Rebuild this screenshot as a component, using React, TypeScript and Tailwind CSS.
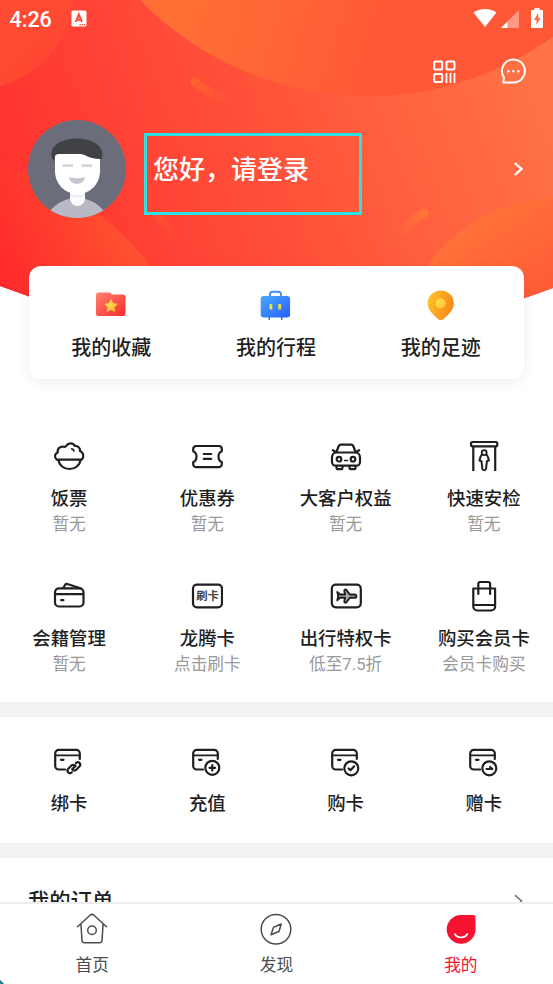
import type { ReactNode } from 'react'

const line = {
  fill: 'none',
  stroke: '#1f1f1f',
  strokeWidth: 2.2,
  strokeLinecap: 'round',
  strokeLinejoin: 'round',
} as const

function Icon({ children }: { children: ReactNode }) {
  return (
    <svg viewBox="0 0 32 32" className="w-8 h-8 shrink-0" {...line}>
      {children}
    </svg>
  )
}

function BankCard({ children }: { children: ReactNode }) {
  return (
    <Icon>
      <path d="M12 24.5H5.8A3.6 3.6 0 0 1 2.2 20.9V8.5A3.6 3.6 0 0 1 5.8 4.9H23.2A3.6 3.6 0 0 1 26.8 8.5V14" />
      <path d="M2.5 10.3H26.5" strokeWidth="1.7" />
      <path d="M8 14.8h2.5" />
      {children}
    </Icon>
  )
}

const shortcuts = [
  {
    label: '我的收藏',
    icon: (
      <svg viewBox="0 0 32 32" className="w-8 h-8">
        <defs>
          <linearGradient id="folder" x1="0" y1="0" x2="1" y2="1">
            <stop stopColor="#ff8170" />
            <stop offset="1" stopColor="#f92c2c" />
          </linearGradient>
          <linearGradient id="star" x1="0" y1="0" x2="1" y2="1">
            <stop stopColor="#fff05a" />
            <stop offset="1" stopColor="#ffb52a" />
          </linearGradient>
        </defs>
        <path d="M3.5 3.5H14c1.4 0 2.2.7 2.5 2H28A2.5 2.5 0 0 1 30.5 8v16.5A2.5 2.5 0 0 1 28 27H3.5A2.5 2.5 0 0 1 1 24.5V6a2.5 2.5 0 0 1 2.5-2.5Z" fill="url(#folder)" />
        <path d="m16 10.7 1.9 3.9 4.2.6-3 3 .7 4.2-3.8-2-3.8 2 .7-4.2-3-3 4.2-.6Z" fill="url(#star)" stroke="url(#star)" strokeWidth=".8" strokeLinejoin="round" />
      </svg>
    ),
  },
  {
    label: '我的行程',
    icon: (
      <svg viewBox="0 0 32 32" className="w-8 h-8">
        <defs>
          <linearGradient id="suitcase" x1="0" y1="0" x2="1" y2="1">
            <stop stopColor="#46a9fc" />
            <stop offset="1" stopColor="#2a5efc" />
          </linearGradient>
        </defs>
        <path d="M10 8V5.2A2.4 2.4 0 0 1 12.4 2.8h6.2A2.4 2.4 0 0 1 21 5.2V8" fill="none" stroke="#3d8ff2" strokeWidth="1.9" />
        <path d="M9.3 27v3.5M21.7 27v3.5" stroke="#3373e8" strokeWidth="1.5" strokeLinecap="round" />
        <rect x=".7" y="7" width="29.4" height="21.5" rx="3" fill="url(#suitcase)" />
        <path d="M10.9 15v5.5M19.7 15v5.5" stroke="#e9e043" strokeWidth="2.8" />
      </svg>
    ),
  },
  {
    label: '我的足迹',
    icon: (
      <svg viewBox="0 0 32 32" className="w-8 h-8">
        <defs>
          <linearGradient id="pin" x1="0" y1="0" x2="1" y2=".3">
            <stop stopColor="#ffc52b" />
            <stop offset="1" stopColor="#f98a1b" />
          </linearGradient>
          <linearGradient id="dot" x1="0" y1="0" x2="1" y2="1">
            <stop stopColor="#ffe94d" />
            <stop offset="1" stopColor="#ffbd2e" />
          </linearGradient>
        </defs>
        <path d="M15.7 1.5c7.5 0 13.1 5.7 13.1 12.7 0 6.3-4.3 10.5-11 16.2-1.3 1.1-2.9 1.1-4.2 0C7 24.7 2.7 20.5 2.7 14.2 2.7 7.2 8.3 1.5 15.7 1.5Z" fill="url(#pin)" />
        <circle cx="15.7" cy="14.5" r="5" fill="url(#dot)" />
      </svg>
    ),
  },
]

const services = [
  {
    label: '饭票',
    note: '暂无',
    icon: (
      <Icon>
        <path d="M3.8 19.6C.8 17.2 1.8 13.6 4.7 12.5 4 8.6 7.4 6 10.8 6.8c1.1.3 2-.1 2.7-1.2 1.8-3 6.7-3 8.2.3 3.3-.4 5.7 2.2 5.3 5.2 3.9 1.6 4.1 6.2 1.7 8.5Z" />
        <path d="M5.5 20c.6 5.3 5.3 9 11 9s10.4-3.7 11-9" />
        <path d="M18.7 8.8c1.3.1 2 .9 2.2 2.2" strokeWidth="1.7" />
      </Icon>
    ),
  },
  {
    label: '优惠券',
    note: '暂无',
    icon: (
      <Icon>
        <path d="M5.2 6h22.6a3 3 0 0 1 3 3v2.3c-2 .8-3.3 2.9-3.3 5.4s1.3 4.6 3.3 5.4v2.1a3 3 0 0 1-3 3H5.2a3 3 0 0 1-3-3v-2.1c2-.8 3.3-2.9 3.3-5.4s-1.3-4.6-3.3-5.4V9a3 3 0 0 1 3-3Z" />
        <path d="M12.8 14h7.4M12.8 18.9h7.4" />
      </Icon>
    ),
  },
  {
    label: '大客户权益',
    note: '暂无',
    icon: (
      <Icon>
        <path d="m6.5 12 2-5.5C9 5.300 9.700 4.700 11 4.700h10c1.300 0 2 .6 2.500 1.800l2 5.500" />
        <path d="M6.500 12.500h19c2.700 0 4.500 2.200 4.500 5V22a3.700 3.700 0 0 1-3.700 3.700H5.700A3.700 3.700 0 0 1 2 22v-4.500c0-2.800 1.800-5 4.500-5ZM2.800 10.200l3.500 2M29.200 10.200l-3.500 2" />
        <path d="M6.5 26v1.4c0 1.1.7 1.8 1.8 1.8h2.4c1.1 0 1.8-.7 1.8-1.8V26M19.5 26v1.4c0 1.1.7 1.8 1.8 1.8h2.4c1.1 0 1.8-.7 1.8-1.8V26" />
        <circle cx="9" cy="19.2" r="2.3" />
        <circle cx="23" cy="19.2" r="2.3" />
        <path d="M14.5 20.5h3" strokeWidth="1.5" />
      </Icon>
    ),
  },
  {
    label: '快速安检',
    note: '暂无',
    icon: (
      <Icon>
        <rect x="3" y="2" width="26.3" height="4.3" rx="1.5" />
        <path d="M5.3 7v24M27.2 7v24" strokeLinecap="butt" />
        <path d="M14 14.600c-1.500.8-2 3.900-2.500 6l2 .7.9 7.700c.2 1.700 3.400 1.700 3.600 0l.9-7.700 2-.7c-.5-2.100-1-5.200-2.500-6" strokeWidth="2" />
        <circle cx="16.2" cy="12.6" r="2.5" strokeWidth="1.8" />
      </Icon>
    ),
  },
  {
    label: '会籍管理',
    note: '暂无',
    icon: (
      <Icon>
        <rect x="2" y="8.3" width="28.5" height="18.2" rx="4" />
        <path d="M2.5 14.2h27.5M8.2 20.2h2.2M10.3 7.8l2-3.1c.5-.8 1.2-1 2-.7L27.5 8.3" />
      </Icon>
    ),
  },
  {
    label: '龙腾卡',
    note: '点击刷卡',
    icon: (
      <Icon>
        <rect x="2" y="4.7" width="29" height="22.6" rx="4" />
        <text x="16.5" y="20" textAnchor="middle" fontSize="11.3" fontWeight="700" fill="#444" stroke="none">
          刷卡
        </text>
      </Icon>
    ),
  },
  {
    label: '出行特权卡',
    note: '低至7.5折',
    icon: (
      <Icon>
        <rect x="1.8" y="4.7" width="29" height="22.6" rx="4" />
        <path d="m7.300 12 2.800 2.500h5L14.300 11c-.3-1.500 1.300-2 2.200-.9l3.300 4.400h4.500c2.800 0 2.800 3.300 0 3.300h-4.500l-3.300 4.400c-.9 1.100-2.500.6-2.200-.9l.8-3.500h-5l-2.800 2.500.9-4.200Z" fill="#aaa" strokeWidth="1.900" />
      </Icon>
    ),
  },
  {
    label: '购买会员卡',
    note: '会员卡购买',
    icon: (
      <Icon>
        <path d="M5.3 8.5h21.8v18a4 4 0 0 1-4 4H9.3a4 4 0 0 1-4-4ZM5.5 25h21.5" />
        <path d="M10.3 14V4a2 2 0 0 1 2-2h7.800a2 2 0 0 1 2 2v10" />
      </Icon>
    ),
  },
]

const cards = [
  {
    label: '绑卡',
    icon: (
      <BankCard>
        <path d="M18.8 27.3c-1.2 1.2-2.7 1-3.5.2-1-1-1.1-2.5 0-3.7l2.9-3c1.1-1.1 2.4-1.2 3.4-.5M22.9 18.1c1.2-1.2 2.7-1 3.5-.2 1 1 1.1 2.5 0 3.7l-2.9 3c-1.1 1.1-2.4 1.2-3.4.5M19.2 24.2l3.3-3.3" />
      </BankCard>
    ),
  },
  {
    label: '充值',
    icon: (
      <BankCard>
        <circle cx="21.3" cy="22.8" r="7" />
        <path d="M18.5 22.8h5.6M21.3 20v5.6" />
      </BankCard>
    ),
  },
  {
    label: '购卡',
    icon: (
      <BankCard>
        <circle cx="21.3" cy="23.3" r="7" />
        <path d="m18.6 23.5 1.9 1.8 3.7-4" />
      </BankCard>
    ),
  },
  {
    label: '赠卡',
    icon: (
      <BankCard>
        <circle cx="21.3" cy="23.3" r="7" />
        <path d="M18.5 24h5.8l-2.2-2" />
      </BankCard>
    ),
  },
]

const tabs = [
  {
    label: '首页',
    icon: (
      <svg viewBox="0 0 32 32" className="w-8 h-8" {...line} stroke="#4d4d4d" strokeWidth="1.5">
        <path d="M1.6 13.7 14 2.3c1.3-1.2 2.7-1.2 4 0l12.4 11.4M5 11v1l1 15.5c.1 1.5 1 2.3 2.5 2.3h15c1.5 0 2.4-.8 2.5-2.3L27 12v-1" />
        <circle cx="16" cy="17.3" r="4.3" />
      </svg>
    ),
  },
  {
    label: '发现',
    icon: (
      <svg viewBox="0 0 32 32" className="w-8 h-8" {...line} stroke="#4d4d4d" strokeWidth="1.5">
        <circle cx="16" cy="16.3" r="14.8" />
        <path d="M21.3 11 19 18.5l-8 3.2 2.5-7.5Z" />
      </svg>
    ),
  },
  {
    label: '我的',
    active: true,
    icon: (
      <svg viewBox="0 0 32 32" className="w-8 h-8">
        <path d="M16 2h12.5c1.3 0 2 .7 2 2v12.4A14.4 14.4 0 1 1 16 2Z" fill="#f5132f" />
        <path d="M9.8 21c2.8 4.6 9.7 4.6 12.5 0" fill="none" stroke="#fff" strokeWidth="1.6" strokeLinecap="round" />
      </svg>
    ),
  },
]

function HeaderBackground() {
  return (
    <svg viewBox="0 0 553 345" className="absolute left-0 top-0 w-full h-[345px]">
      <defs>
        <linearGradient id="bg" gradientUnits="userSpaceOnUse" x1="10" y1="280" x2="540" y2="80">
          <stop stopColor="#ff2f2e" />
          <stop offset=".5" stopColor="#ff5139" />
          <stop offset="1" stopColor="#ff7346" />
        </linearGradient>
        <linearGradient id="top" gradientUnits="userSpaceOnUse" x1="190" y1="0" x2="380" y2="60">
          <stop stopColor="#ff6f35" />
          <stop offset="1" stopColor="#ff5836" />
        </linearGradient>
        <linearGradient id="right" gradientUnits="userSpaceOnUse" x1="470" y1="205" x2="530" y2="300">
          <stop stopColor="#ff763b" />
          <stop offset="1" stopColor="#ff5b35" />
        </linearGradient>
        <linearGradient id="left" gradientUnits="userSpaceOnUse" x1="140" y1="230" x2="10" y2="280">
          <stop stopColor="#ff5530" />
          <stop offset="1" stopColor="#ff2c2c" />
        </linearGradient>
        <linearGradient id="corner" x1="0" y1="0" x2="1" y2="1">
          <stop stopColor="#ff5a30" />
          <stop offset="1" stopColor="#ff4433" />
        </linearGradient>
        <linearGradient id="streakA" gradientUnits="userSpaceOnUse" x1="192" y1="80" x2="226" y2="102">
          <stop stopColor="#ff6232" />
          <stop offset="1" stopColor="#ff6232" stopOpacity="0" />
        </linearGradient>
        <linearGradient id="streakB" gradientUnits="userSpaceOnUse" x1="427" y1="211" x2="400" y2="236">
          <stop stopColor="#ff7638" />
          <stop offset="1" stopColor="#ff7638" stopOpacity="0" />
        </linearGradient>
        <linearGradient id="streakC" gradientUnits="userSpaceOnUse" x1="160" y1="218" x2="178" y2="238">
          <stop stopColor="#ff4e33" />
          <stop offset="1" stopColor="#ff4e33" stopOpacity="0" />
        </linearGradient>
        <clipPath id="curve">
          <path d="M0 0H553V288Q276 392 0 286Z" />
        </clipPath>
      </defs>
      <g clipPath="url(#curve)">
        <rect width="553" height="345" fill="url(#bg)" />
        <circle cx="-25" cy="-10" r="99" fill="url(#corner)" />
        <circle cx="368" cy="-222.7" r="318.7" fill="url(#top)" />
        <circle cx="-68" cy="430" r="273" fill="url(#left)" />
        <circle cx="560" cy="361" r="163.5" fill="url(#right)" />
        <g fill="none" strokeLinecap="round" strokeWidth="9">
          <path d="M195 82q12 9 28 17" stroke="url(#streakA)" />
          <path d="M424 213q-14 8-22 20" stroke="url(#streakB)" />
          <path d="M160 218l16 20" stroke="url(#streakC)" />
        </g>
      </g>
    </svg>
  )
}

function StatusBar() {
  return (
    <div className="flex items-center h-[38px] pl-[9.5px] pr-[9px] text-white">
      <span className="mt-[2px] font-[Roboto] font-medium text-[21.5px] leading-none">4:26</span>
      <svg viewBox="0 0 16 17" className="w-4 h-[17px] ml-[19px] -mt-px">
        <rect x=".5" y=".5" width="15" height="16" rx="1.5" fill="#fff" />
        <path d="M4.7 12 7.8 4.3 10.9 12M5.9 9.7h3.8" fill="none" stroke="#ff4534" strokeWidth="1.9" />
        <path d="M8.5 14.6h6" stroke="#ff4534" strokeWidth="1.3" strokeDasharray="1.4 .8" />
      </svg>
      <svg viewBox="0 0 24 20" className="w-6 h-5 ml-auto -mt-[2px]">
        <path d="M12 19 .5 4.5C6.5-.3 17.5-.3 23.5 4.5Z" fill="#fff" />
      </svg>
      <svg viewBox="0 0 18 20" className="w-[18px] h-5 ml-[4px] -mt-px">
        <path d="M18 1v18H0Z" fill="#fff" opacity=".4" />
        <path d="M6.5 12.5V19H0Z" fill="#fff" />
      </svg>
      <svg viewBox="0 0 14 20" className="w-[14px] h-5 ml-[11px] -mt-[2px]">
        <path d="M4.5 0h5v2H12a1 1 0 0 1 1 1v16a1 1 0 0 1-1 1H2a1 1 0 0 1-1-1V3a1 1 0 0 1 1-1h2.5Z" fill="#fff" />
        <path d="M8.2 5 4 11.8h2.5V17L10.5 10H8.2Z" fill="#ff6540" />
      </svg>
    </div>
  )
}

function Avatar() {
  return (
    <svg viewBox="0 0 98 98" className="w-[98px] h-[98px] shrink-0">
      <defs>
        <clipPath id="avatar">
          <circle cx="49" cy="49" r="49" />
        </clipPath>
      </defs>
      <g clipPath="url(#avatar)">
        <rect width="98" height="98" fill="#6b6d7a" />
        <path d="M18 98c5-12 17-20 31-20s26 8 31 20Z" fill="#b9b9c5" />
        <path d="M42 70h15v8.5a7.5 7.5 0 0 1-15 0Z" fill="#fafaff" />
        <path d="M42 73.5q7.5 4 15 0v3q-7.5 2-15 0Z" fill="#ececf5" />
        <path d="M27 33h45v18c0 13-10 23-22.5 23S27 64 27 51Z" fill="#fff" />
        <path d="M25.5 41.5C23.8 39 23.2 36 23.5 32.5 24.5 24 35 18.5 49 18.5S74.5 25 74.5 34c0 2-.3 3.7-1 5-6.5.3-11.5-1.3-16-3.5-2-1-3.5-1.5-6-1.5H31c-3 0-4.3 1.5-4.3 4Z" fill="#404247" />
        <path d="M34.5 45.6h10.5M53.5 45.6H64" stroke="#d5d5dc" strokeWidth="2.8" />
        <path d="M41 57.3q8 2 16 0c-.5 4-3.5 6.5-8 6.5s-7.5-2.5-8-6.5Z" fill="#c5c5cf" />
      </g>
    </svg>
  )
}

function Chevron({ className }: { className: string }) {
  return (
    <svg viewBox="0 0 12 18" className={className} fill="none" stroke="currentColor" strokeLinecap="round">
      <path d="m2.5 3.7 6 5.3-6 5.3" />
    </svg>
  )
}

export default function App() {
  return (
    <div className="relative flex flex-col w-[553px] h-[984px] overflow-hidden bg-white text-[#1f1f1f] font-['Noto_Sans_CJK_SC',sans-serif]">
      <HeaderBackground />

      <main className="relative flex-1 min-h-0 overflow-hidden">
        <StatusBar />

        <div className="flex justify-end gap-[42px] h-[82px] pt-[19px] pr-[26px]">
          <svg viewBox="0 0 26 28" className="w-[26px] h-7" fill="none" stroke="#fff" strokeWidth="2">
            <rect x="3.2" y="4.5" width="8" height="8" rx="1" />
            <rect x="15.5" y="4.5" width="8" height="8" rx="1" />
            <rect x="3.2" y="17" width="8" height="8" rx="1" />
            <path d="M15.5 16v10M19.5 16v10M23.5 16v10" strokeWidth="1.7" />
          </svg>
          <svg viewBox="0 0 28 28" className="w-7 h-7" fill="none" stroke="#fff" strokeWidth="2" strokeLinejoin="round">
            <path d="M4.8 20.3A11.5 11.5 0 1 1 14.3 25.5H4.3L4.8 20.3Z" />
            <path d="M9.3 14.2h.01M14.3 14.2h.01M19.3 14.2h.01" strokeWidth="2.6" strokeLinecap="round" />
          </svg>
        </div>

        <div className="flex items-center h-[98px] px-7 text-white">
          <Avatar />
          <div className="w-[218px] h-[82px] ml-[18px] mt-[10px] pl-[6px] pt-3 border-3 border-[#2fe0e2]">
            <p className="text-[26px] leading-[39px] font-medium whitespace-nowrap">您好，请登录</p>
          </div>
          <Chevron className="w-3 h-[18px] ml-auto stroke-[2.3]" />
        </div>

        <section className="grid grid-cols-3 mx-[29px] mt-[47.5px] h-[113px] pt-[23px] pr-px rounded-xl bg-white shadow-[0_4px_14px_rgba(0,0,0,0.06)]">
          {shortcuts.map((item) => (
            <div key={item.label} className="flex flex-col items-center">
              {item.icon}
              <span className="mt-[11px] text-[20px] leading-[30px] font-medium">{item.label}</span>
            </div>
          ))}
        </section>

        <section className="grid grid-cols-4 gap-y-[45px] pt-[61.5px] pb-[27px]">
          {services.map((item) => (
            <div key={item.label} className="flex flex-col items-center h-[95px]">
              {item.icon}
              <span className="mt-[11px] text-[18.4px] leading-7 font-medium">{item.label}</span>
              <span className="mt-[2px] text-[16.7px] leading-6 text-[#999] font-[Roboto,'Noto_Sans_CJK_SC',sans-serif]">{item.note}</span>
            </div>
          ))}
        </section>

        <section className="grid grid-cols-4 h-[156px] pt-7 border-y-[15px] border-[#f2f3f5]">
          {cards.map((item) => (
            <div key={item.label} className="flex flex-col items-center">
              {item.icon}
              <span className="mt-[11px] text-[18.4px] leading-7 font-medium">{item.label}</span>
            </div>
          ))}
        </section>

        <section className="flex items-start justify-between pl-7 pr-[28px] pt-[26px]">
          <h2 className="text-[21.3px] leading-8 font-medium">我的订单</h2>
          <Chevron className="w-3 h-[18px] mt-[8px] text-[#777] stroke-[1.6]" />
        </section>
      </main>

      <nav className="relative grid grid-cols-3 h-[82px] pt-[9px] border-t-2 border-[#ededed] bg-white">
        {tabs.map((tab) => (
          <div key={tab.label} className={tab.active ? 'flex flex-col items-center text-[#f5132f]' : 'flex flex-col items-center text-[#4d4d4d]'}>
            {tab.icon}
            <span className="mt-[7px] text-[16.7px] leading-6">{tab.label}</span>
          </div>
        ))}
        <svg viewBox="0 0 4 4" className="absolute left-0 bottom-0 w-1 h-1">
          <path d="M0 0l4 4H0Z" fill="#123b46" />
          <path d="M0 1l3 3H0Z" fill="#1595ad" />
        </svg>
      </nav>
    </div>
  )
}
